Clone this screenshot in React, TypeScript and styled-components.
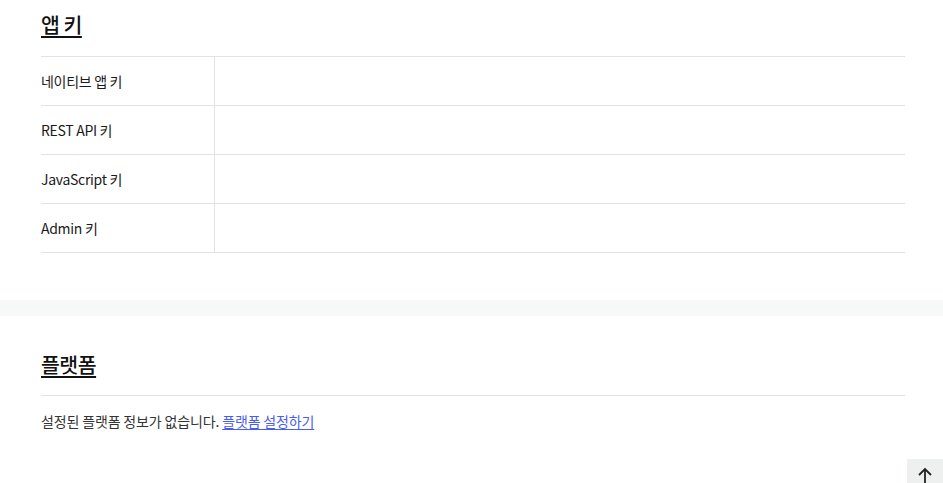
import React from "react";
import styled, { createGlobalStyle } from "styled-components";

const Global = createGlobalStyle`
  html, body { margin: 0; padding: 0; background: #fff; }
  body { font-family: "Noto Sans CJK KR", "Noto Sans", sans-serif; color: #222; }
`;

const Page = styled.div`
  display: flex;
  flex-direction: column;
`;

const Section = styled.section<{ $top: number; $bottom: number }>`
  padding: ${(p) => p.$top}px 38px ${(p) => p.$bottom}px 41px;
`;

const Band = styled.div`
  height: 16px;
  background: #f7f8f8;
`;

const Title = styled.h2<{ $gap: number }>`
  margin: 0 0 ${(p) => p.$gap}px 0;
  font-size: 20.5px;
  line-height: 32px;
  font-weight: 500;
  color: #111;
  text-decoration: underline;
  text-decoration-thickness: 2px;
  text-underline-offset: 3px;
  letter-spacing: -0.5px;
`;

const Table = styled.div`
  display: grid;
  grid-template-columns: 174px 1fr;
  border-top: 1px solid #e3e3e3;
`;

const LabelCell = styled.div`
  height: 48px;
  display: flex;
  align-items: center;
  font-size: 14px;
  letter-spacing: -0.3px;
  color: #1a1a1a;
  border-bottom: 1px solid #e3e3e3;
  border-right: 1px solid #e3e3e3;
`;

const ValueCell = styled.div`
  height: 48px;
  display: flex;
  align-items: center;
  padding-left: 40px;
  font-size: 14px;
  color: #f0f0f0;
  border-bottom: 1px solid #e3e3e3;
  letter-spacing: 5px;
`;

const Divider = styled.div`
  height: 1px;
  background: #e3e3e3;
  margin-bottom: 15px;
`;

const Message = styled.p`
  margin: 0;
  font-size: 14px;
  line-height: 20px;
  letter-spacing: -0.15px;
  color: #333;
`;

const Link = styled.a`
  color: #4a5cf0;
  text-decoration: underline;
  text-underline-offset: 2px;
`;

const TopButton = styled.button`
  position: fixed;
  right: 0;
  top: 459px;
  width: 36px;
  height: 36px;
  border: none;
  padding: 0;
  background: #eeefef;
  display: flex;
  align-items: center;
  justify-content: center;
  cursor: pointer;
`;

const rows = [
  { label: "네이티브 앱 키", value: "" },
  { label: "REST API 키", value: "" },
  { label: "JavaScript 키", value: "" },
  { label: "Admin 키", value: "" },
];

export default function App() {
  return (
    <Page>
      <Global />
      <Section $top={8} $bottom={47}>
        <Title $gap={16}>앱 키</Title>
        <Table>
          {rows.map((r) => (
            <React.Fragment key={r.label}>
              <LabelCell>{r.label}</LabelCell>
              <ValueCell>{r.value}</ValueCell>
            </React.Fragment>
          ))}
        </Table>
      </Section>
      <Band />
      <Section $top={32} $bottom={40}>
        <Title $gap={15}>플랫폼</Title>
        <Divider />
        <Message>
          설정된 플랫폼 정보가 없습니다. <Link href="#">플랫폼 설정하기</Link>
        </Message>
      </Section>
      <TopButton aria-label="맨 위로">
        <svg width="20" height="20" viewBox="0 0 20 20" fill="none" stroke="#222" strokeWidth="1.8">
          <path d="M10 2v17" />
          <path d="M4 8l6-6 6 6" />
        </svg>
      </TopButton>
    </Page>
  );
}
